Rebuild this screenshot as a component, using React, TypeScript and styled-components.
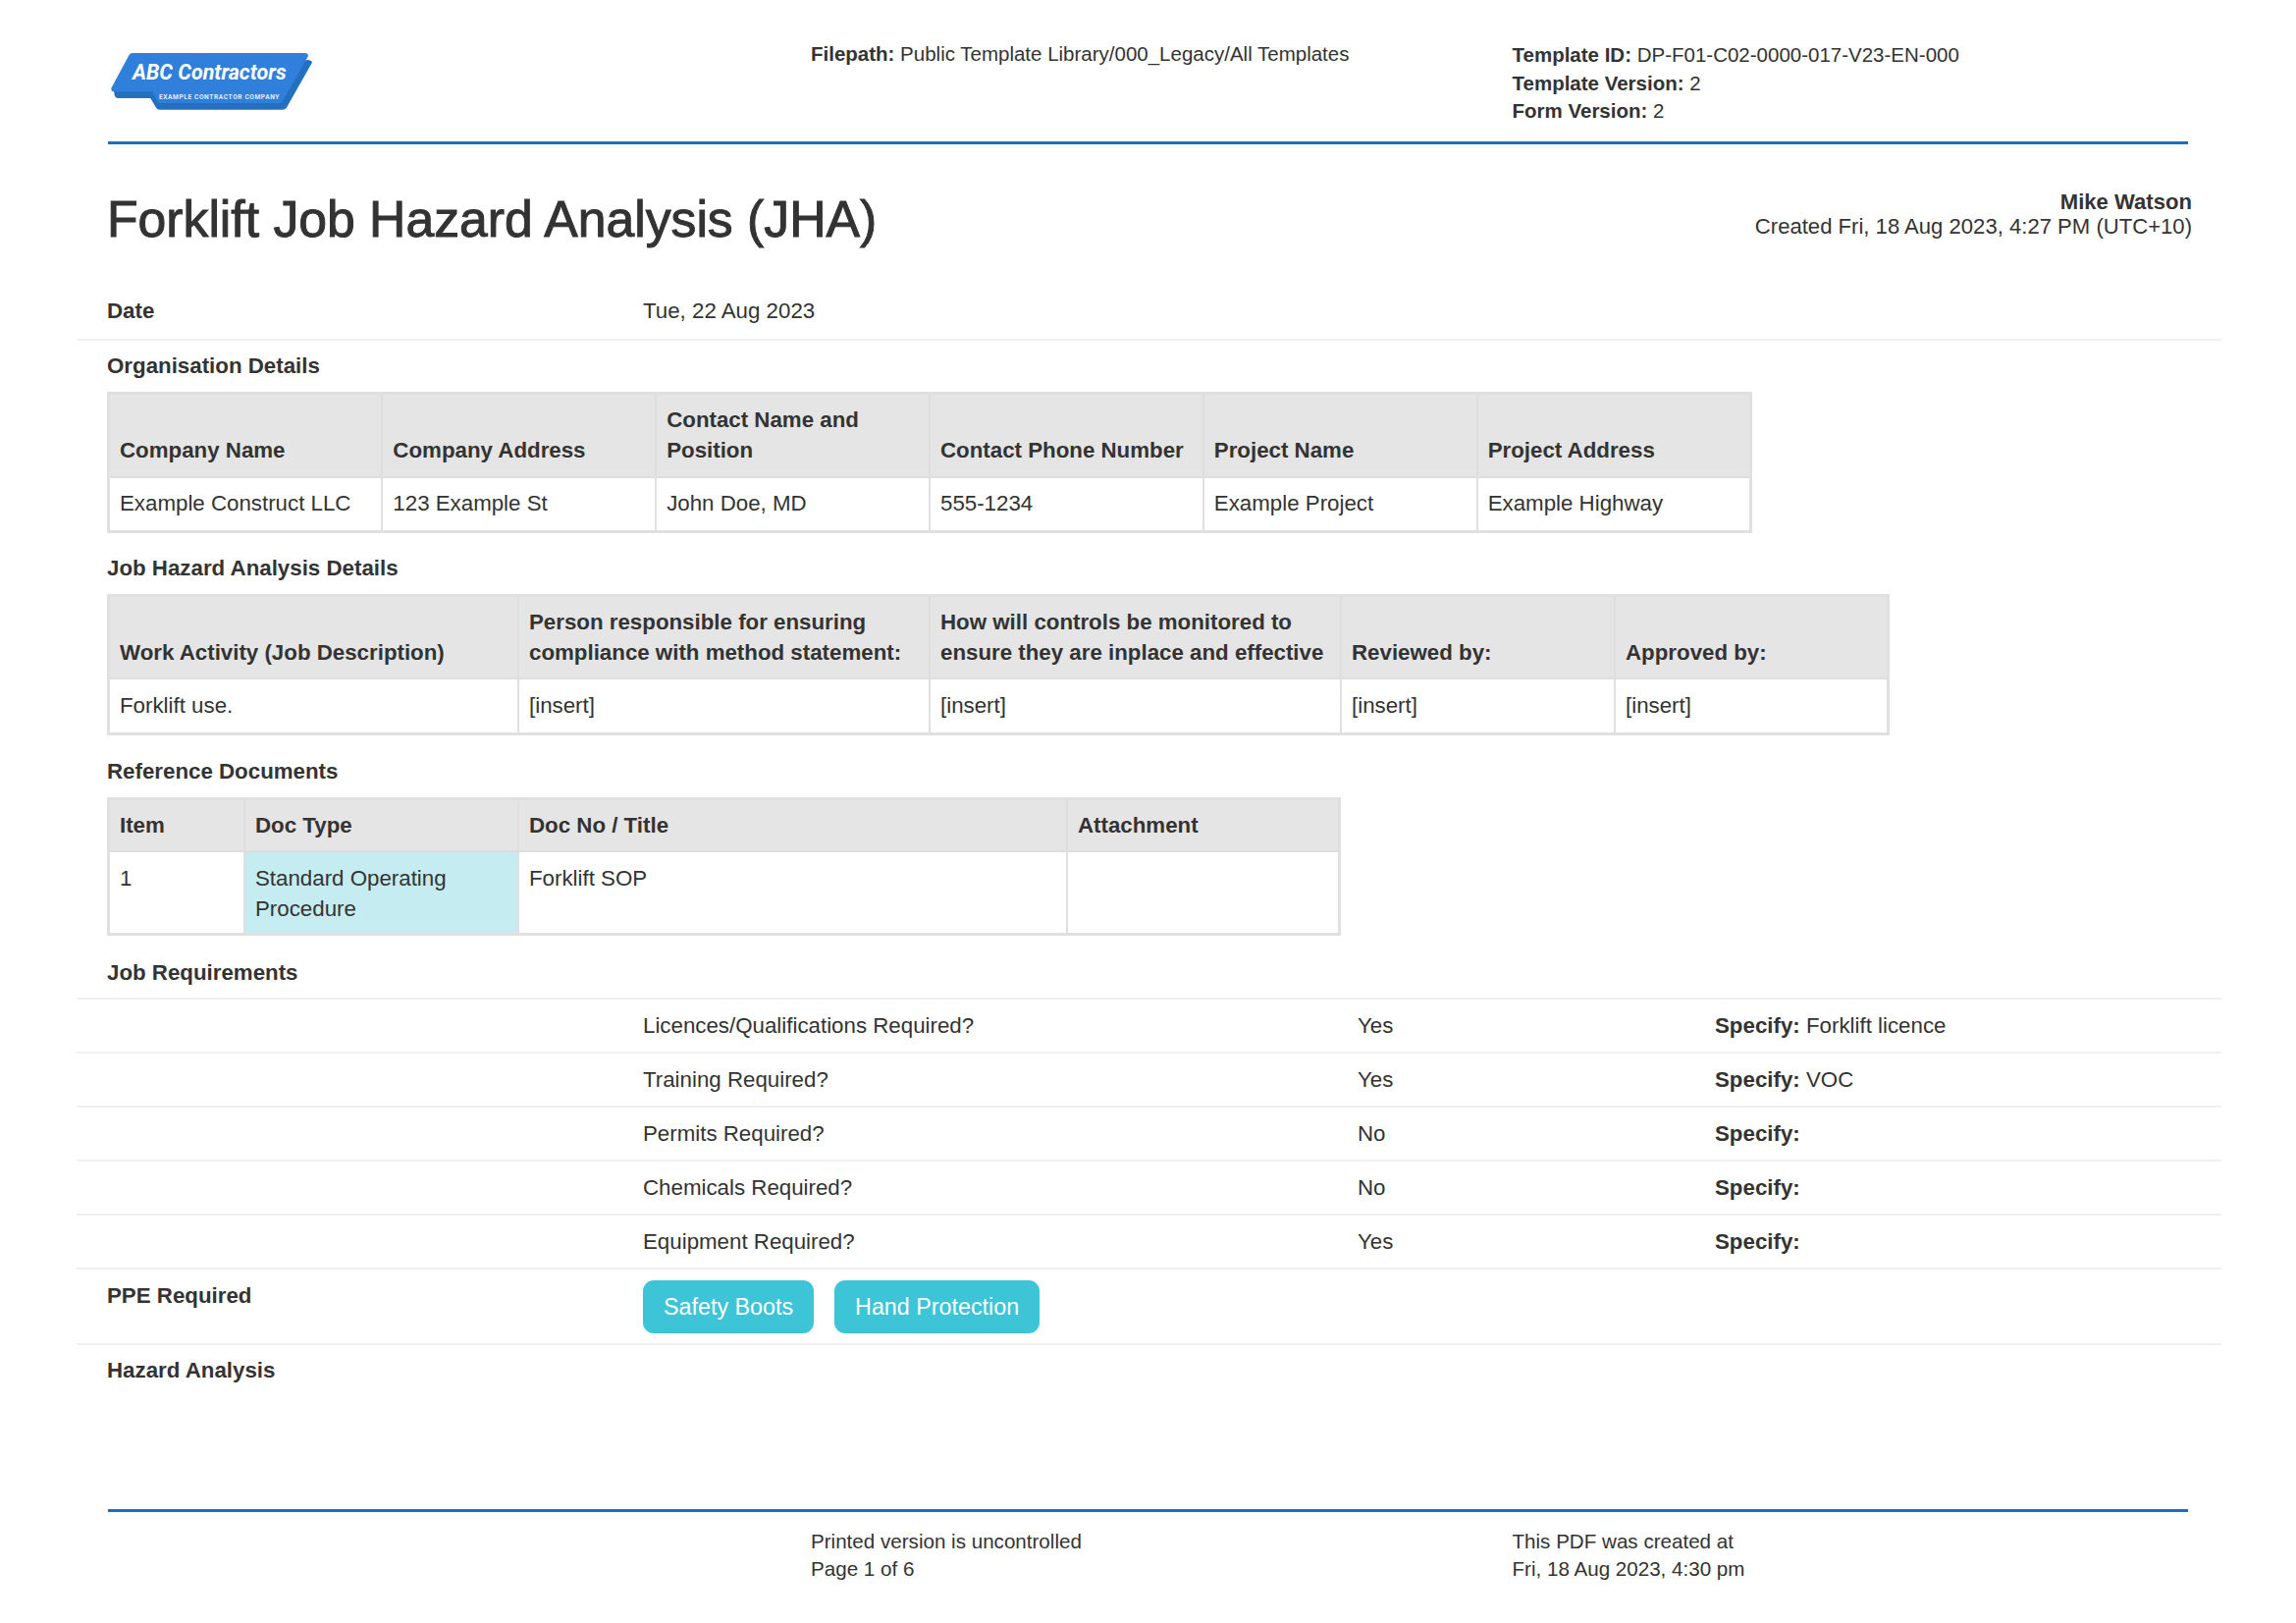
import styled, { createGlobalStyle } from "styled-components";

const GlobalStyle = createGlobalStyle`
  html, body {
    margin: 0;
    padding: 0;
    background: #fff;
  }
  body {
    font-family: "Liberation Sans", Arial, sans-serif;
    font-size: 22.3px;
    line-height: 31.3px;
    color: #333;
  }
`;

const Page = styled.div`
  width: 2339px;
  height: 1653px;
  overflow: hidden;
  display: flex;
  flex-direction: column;
`;

const PageHeader = styled.header`
  margin: 0 110px;
  height: 147px;
  border-bottom: 3px solid #1a6fc0;
  box-sizing: border-box;
  display: grid;
  grid-template-columns: 716px 714.5px 1fr;
  padding-top: 41px;
`;

const Logo = styled.svg`
  width: 212px;
  height: 62px;
  margin: 12px 0 0 1px;
`;

const MetaLine = styled.div`
  height: 28px;
  line-height: 28px;
  font-size: 20.5px;

  &:first-child {
    height: 30px;
    line-height: 30px;
  }
`;

const Strong = styled.b`
  font-weight: 700;
`;

const TitleRow = styled.div`
  margin: 0 106px 0 109px;
  height: 150px;
  display: flex;
  justify-content: space-between;
`;

const Title = styled.h1`
  margin: 43.5px 0 0;
  font-size: 51.7px;
  line-height: 64px;
  font-weight: 500;
  -webkit-text-stroke: 1px #333;
`;

const CreatedBy = styled.div`
  margin-top: 47px;
  text-align: right;
  line-height: 24.5px;
  font-size: 22.1px;
`;

const Row = styled.div<{ $height: number }>`
  margin: 0 76px 0 78px;
  padding: 0 31px;
  height: ${(p) => p.$height}px;
  box-sizing: border-box;
  border-bottom: 2px solid #f0f0f0;
  display: grid;
  grid-template-columns: 546px 728px 364px 1fr;
  align-items: center;
`;

const DateRow = styled(Row)`
  padding-bottom: 8px;
`;

const Divider = styled.div`
  margin: 0 76px 0 78px;
  border-bottom: 2px solid #f0f0f0;
`;

const RowLabel = styled.div`
  font-weight: 700;
`;

const SectionTitle = styled.div<{ $top?: number }>`
  margin: ${(p) => p.$top ?? 0}px 0 0 109px;
  height: 52px;
  display: flex;
  align-items: center;
  font-weight: 700;
`;

const Table = styled.table<{ $width: number }>`
  margin-left: 109px;
  width: ${(p) => p.$width}px;
  border-collapse: collapse;
  table-layout: fixed;
  border: 3px solid #e0e0e0;
`;

const Th = styled.th`
  background: #e5e5e5;
  border: 2px solid #dedede;
  padding: 10px 10px 10px;
  text-align: left;
  vertical-align: bottom;
  font-weight: 700;
`;

const Td = styled.td<{ $tint?: boolean }>`
  background: ${(p) => (p.$tint ? "#c5edf1" : "#fff")};
  border: 2px solid #e0e0e0;
  padding: 10.5px 10px ${(p) => (p.$tint ? 9 : 11.5)}px;
  vertical-align: top;
`;

const PpeRow = styled(Row)`
  align-items: start;
  padding-top: 11px;
`;

const Pills = styled.div`
  display: flex;
  gap: 21px;
`;

const Pill = styled.span`
  background: #3dc4d6;
  color: #fff;
  border-radius: 11px;
  height: 54px;
  line-height: 54px;
  padding: 0 21px;
  font-size: 23.3px;
`;

const Spacer = styled.div`
  flex: 1;
`;

const PageFooter = styled.footer`
  margin: 0 110px;
  height: 116px;
  border-top: 3px solid #1a6fc0;
  box-sizing: border-box;
  display: grid;
  grid-template-columns: 716px 714.5px 1fr;
  padding-top: 16px;
  font-size: 20.6px;
  line-height: 27.5px;
`;

const orgColumns = ["Company Name", "Company Address", "Contact Name and Position", "Contact Phone Number", "Project Name", "Project Address"];
const orgValues = ["Example Construct LLC", "123 Example St", "John Doe, MD", "555-1234", "Example Project", "Example Highway"];

const jhaColumns = [
  { label: "Work Activity (Job Description)", width: 417.5 },
  { label: "Person responsible for ensuring compliance with method statement:", width: 419 },
  { label: "How will controls be monitored to ensure they are inplace and effective", width: 419 },
  { label: "Reviewed by:", width: 279 },
  { label: "Approved by:", width: 278 },
];
const jhaValues = ["Forklift use.", "[insert]", "[insert]", "[insert]", "[insert]"];

const requirements = [
  { question: "Licences/Qualifications Required?", answer: "Yes", specify: "Forklift licence" },
  { question: "Training Required?", answer: "Yes", specify: "VOC" },
  { question: "Permits Required?", answer: "No", specify: "" },
  { question: "Chemicals Required?", answer: "No", specify: "" },
  { question: "Equipment Required?", answer: "Yes", specify: "" },
];

const ContractorLogo = () => (
  <Logo viewBox="0 0 212 62">
    <path d="M203 8 L206 9 Q207.5 10 206.5 11.5 L181 56.5 Q179.5 58.7 177 58.7 L52 58.7 Q48.5 58.7 47 55 L42.3 47 L9 47 Q6.5 47 5.7 44 L5 40 Z" fill="#2470c0" />
    <path d="M20.5 3 Q21.5 1 24 1 L199 1 Q204 1 202.5 5 L175.7 52 L50.7 52 L44 40.3 L5 40.3 Q1.5 40 2.5 36.5 Z" fill="#2f7fdb" />
    <text x="24" y="28" fontFamily="Roboto, sans-serif" fontStyle="italic" fontWeight="700" fontSize="21.5" fill="#fff">ABC Contractors</text>
    <text x="51" y="47.7" fontFamily="Roboto, sans-serif" fontWeight="700" fontSize="6.6" letterSpacing="0.6" fill="#e4eefa">EXAMPLE CONTRACTOR COMPANY</text>
  </Logo>
);

const App = () => {
  return (
    <Page>
      <GlobalStyle />
      <PageHeader>
        <ContractorLogo />
        <MetaLine><Strong>Filepath:</Strong> Public Template Library/000_Legacy/All Templates</MetaLine>
        <div>
          <MetaLine><Strong>Template ID:</Strong> DP-F01-C02-0000-017-V23-EN-000</MetaLine>
          <MetaLine><Strong>Template Version:</Strong> 2</MetaLine>
          <MetaLine><Strong>Form Version:</Strong> 2</MetaLine>
        </div>
      </PageHeader>

      <TitleRow>
        <Title>Forklift Job Hazard Analysis (JHA)</Title>
        <CreatedBy>
          <Strong>Mike Watson</Strong>
          <br />
          Created Fri, 18 Aug 2023, 4:27 PM (UTC+10)
        </CreatedBy>
      </TitleRow>

      <DateRow $height={50}>
        <RowLabel>Date</RowLabel>
        <div>Tue, 22 Aug 2023</div>
      </DateRow>

      <SectionTitle>Organisation Details</SectionTitle>
      <Table $width={1676}>
        <thead>
          <tr>{orgColumns.map((c) => <Th key={c}>{c}</Th>)}</tr>
        </thead>
        <tbody>
          <tr>{orgValues.map((v) => <Td key={v}>{v}</Td>)}</tr>
        </tbody>
      </Table>

      <SectionTitle $top={10}>Job Hazard Analysis Details</SectionTitle>
      <Table $width={1812.5}>
        <colgroup>
          {jhaColumns.map((c) => <col key={c.label} width={c.width} />)}
        </colgroup>
        <thead>
          <tr>{jhaColumns.map((c) => <Th key={c.label}>{c.label}</Th>)}</tr>
        </thead>
        <tbody>
          <tr>{jhaValues.map((v, idx) => <Td key={idx}>{v}</Td>)}</tr>
        </tbody>
      </Table>

      <SectionTitle $top={11}>Reference Documents</SectionTitle>
      <Table $width={1253.5}>
        <colgroup>
          <col width={138.5} />
          <col width={279} />
          <col width={559} />
          <col width={277} />
        </colgroup>
        <thead>
          <tr>
            <Th>Item</Th>
            <Th>Doc Type</Th>
            <Th>Doc No / Title</Th>
            <Th>Attachment</Th>
          </tr>
        </thead>
        <tbody>
          <tr>
            <Td>1</Td>
            <Td $tint>Standard Operating Procedure</Td>
            <Td>Forklift SOP</Td>
            <Td></Td>
          </tr>
        </tbody>
      </Table>

      <SectionTitle $top={11}>Job Requirements</SectionTitle>
      <Divider />
      {requirements.map((r) => (
        <Row $height={54.9} key={r.question}>
          <div />
          <div>{r.question}</div>
          <div>{r.answer}</div>
          <div><Strong>Specify:</Strong> {r.specify}</div>
        </Row>
      ))}
      <PpeRow $height={77}>
        <RowLabel>PPE Required</RowLabel>
        <Pills>
          <Pill>Safety Boots</Pill>
          <Pill>Hand Protection</Pill>
        </Pills>
      </PpeRow>
      <SectionTitle>Hazard Analysis</SectionTitle>
      <Spacer />

      <PageFooter>
        <div />
        <div>Printed version is uncontrolled<br />Page 1 of 6</div>
        <div>This PDF was created at<br />Fri, 18 Aug 2023, 4:30 pm</div>
      </PageFooter>
    </Page>
  );
};

export default App;
